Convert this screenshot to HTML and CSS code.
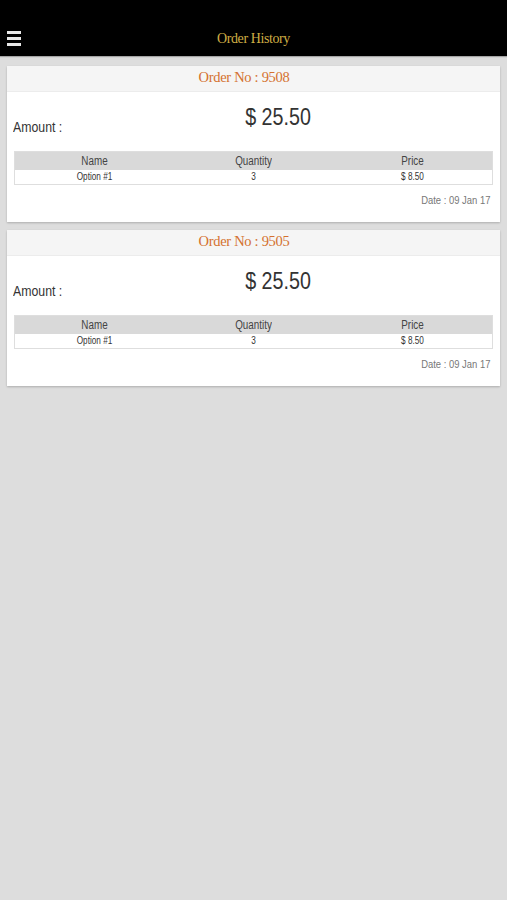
FILE: index.html
```html
<!DOCTYPE html>
<html>
<head>
<meta charset="utf-8">
<title>Order History</title>
<link rel="stylesheet" href="styles.css">
</head>
<body>
<header class="topbar">
  <div class="bar">
    <span class="menu" aria-label="menu"><i></i><i></i><i></i></span>
    <h1 class="title">Order History</h1>
  </div>
</header>
<main class="list">
  <section class="card">
    <div class="card-head">Order No : 9508</div>
    <div class="amount-row">
      <span class="amount-label">Amount :</span>
      <span class="amount-value"><span class="narrow">$ 25.50</span></span>
    </div>
    <div class="items">
      <div class="row head"><span class="narrow">Name</span><span class="narrow">Quantity</span><span class="narrow">Price</span></div>
      <div class="row"><span class="narrow">Option #1</span><span class="narrow">3</span><span class="narrow">$ 8.50</span></div>
    </div>
    <div class="date"><span class="narrow">Date : 09 Jan 17</span></div>
  </section>
  <section class="card">
    <div class="card-head">Order No : 9505</div>
    <div class="amount-row">
      <span class="amount-label">Amount :</span>
      <span class="amount-value"><span class="narrow">$ 25.50</span></span>
    </div>
    <div class="items">
      <div class="row head"><span class="narrow">Name</span><span class="narrow">Quantity</span><span class="narrow">Price</span></div>
      <div class="row"><span class="narrow">Option #1</span><span class="narrow">3</span><span class="narrow">$ 8.50</span></div>
    </div>
    <div class="date"><span class="narrow">Date : 09 Jan 17</span></div>
  </section>
</main>
</body>
</html>
```
FILE: styles.css
```css
html, body {
  margin: 0;
  padding: 0;
}
body {
  background: #dddddd;
  font-family: "Liberation Sans", Arial, sans-serif;
  color: #333;
  min-height: 900px;
}
.narrow {
  display: inline-block;
  transform: scaleX(0.82);
  white-space: nowrap;
}
.topbar {
  background: #000;
  padding-top: 20px;
  height: 36px;
  box-shadow: 0 1px 1px rgba(0,0,0,0.25);
}
.bar {
  position: relative;
  height: 36px;
  display: flex;
  align-items: center;
  justify-content: center;
}
.menu {
  position: absolute;
  left: 7px;
  top: 11px;
  width: 14px;
  display: flex;
  flex-direction: column;
  gap: 3.5px;
}
.menu i {
  display: block;
  height: 2.5px;
  background: #e8e8e8;
}
.title {
  margin: 0;
  font-family: "Liberation Serif", "Times New Roman", serif;
  font-weight: normal;
  font-size: 14px;
  color: #cfae45;
  letter-spacing: -0.4px;
  padding-top: 1px;
}
.list {
  padding: 10px 7px 0 7px;
  display: flex;
  flex-direction: column;
  gap: 8px;
}
.card {
  background: #fff;
  box-shadow: 0 1px 2px rgba(0,0,0,0.22);
  padding-bottom: 14px;
}
.card-head {
  background: #f5f5f5;
  border-bottom: 1px solid #ececec;
  height: 25px;
  line-height: 23px;
  padding-right: 19px;
  text-align: center;
  font-family: "Liberation Serif", "Times New Roman", serif;
  font-size: 14.5px;
  letter-spacing: -0.3px;
  color: #d4712f;
}
.amount-row {
  display: flex;
  padding: 11px 6px 0 6px;
  height: 48px;
}
.amount-label {
  display: block;
  width: 49px;
  flex: none;
  white-space: nowrap;
  font-size: 15px;
  line-height: 18px;
  margin-top: 15px;
  height: 18px;
  transform: scaleX(0.82);
  transform-origin: left center;
  color: #333;
}
.amount-value {
  flex: 1;
  text-align: center;
  font-size: 24px;
  line-height: 28px;
  color: #333;
}
.items {
  margin: 0 7px;
  border: 1px solid #dedede;
}
.row {
  display: grid;
  grid-template-columns: 1fr 1fr 1fr;
  text-align: center;
  font-size: 10px;
  height: 14px;
  line-height: 14px;
  color: #333;
}
.row.head {
  background: #d9d9d9;
  height: 18px;
  line-height: 18px;
  font-size: 12px;
  color: #444;
}
.date {
  text-align: right;
  font-size: 11.5px;
  color: #777;
  padding: 7px 10px 0 0;
  line-height: 16px;
}
.date .narrow {
  transform-origin: right center;
}
```
